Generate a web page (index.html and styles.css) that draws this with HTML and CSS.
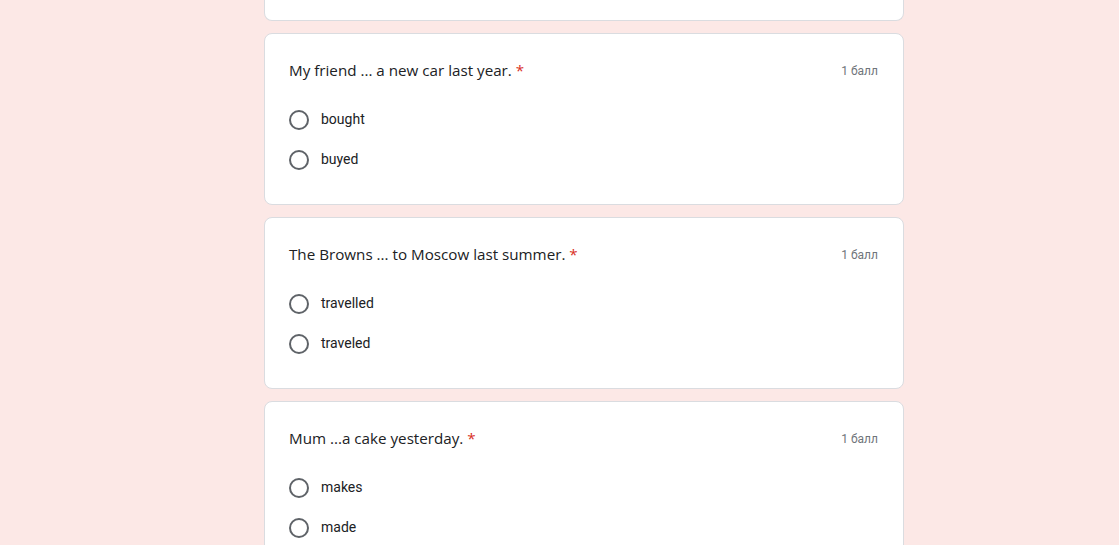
FILE: index.html
```html
<!DOCTYPE html>
<html lang="ru">
<head>
    <meta charset="UTF-8">
    <meta name="viewport" content="width=device-width, initial-scale=1.0">
    <title>Тест</title>
    <link rel="stylesheet" href="styles.css">
</head>
<body>
    <div class="form">
        <div class="card card-cut"></div>

        <div class="card">
            <div class="question">
                <div class="title">My friend ... a new car last year. <span class="req">*</span></div>
                <div class="points">1 балл</div>
            </div>
            <div class="options">
                <label class="option"><span class="radio"></span><span class="text">bought</span></label>
                <label class="option"><span class="radio"></span><span class="text">buyed</span></label>
            </div>
        </div>

        <div class="card">
            <div class="question">
                <div class="title">The Browns ... to Moscow last summer. <span class="req">*</span></div>
                <div class="points">1 балл</div>
            </div>
            <div class="options">
                <label class="option"><span class="radio"></span><span class="text">travelled</span></label>
                <label class="option"><span class="radio"></span><span class="text">traveled</span></label>
            </div>
        </div>

        <div class="card">
            <div class="question">
                <div class="title">Mum ...a cake yesterday. <span class="req">*</span></div>
                <div class="points">1 балл</div>
            </div>
            <div class="options">
                <label class="option"><span class="radio"></span><span class="text">makes</span></label>
                <label class="option"><span class="radio"></span><span class="text">made</span></label>
            </div>
        </div>
    </div>
</body>
</html>
```

FILE: styles.css
```css
* {
    box-sizing: border-box;
    margin: 0;
    padding: 0;
}
body {
    background: #fce8e6;
    font-family: Roboto, Arial, sans-serif;
    color: #202124;
    overflow: hidden;
}
.form {
    width: 640px;
    margin-left: 264px;
    display: flex;
    flex-direction: column;
    gap: 12px;
}
.card {
    background: #fff;
    border: 1px solid #dadce0;
    border-radius: 8px;
    padding: 24px 25px 24px 24px;
}
.card-cut {
    height: 21px;
    border-top: none;
    border-radius: 0 0 8px 8px;
    padding: 0;
}
.question {
    display: flex;
    justify-content: space-between;
    align-items: center;
}
.title {
    font-family: "Open Sans", Roboto, sans-serif;
    font-size: 15.2px;
    line-height: 24px;
    color: #202124;
}
.req {
    color: #d93025;
}
.points {
    font-size: 12px;
    color: #70757a;
    margin-top: 1px;
}
.options {
    margin-top: 18px;
}
.option {
    display: flex;
    align-items: center;
    height: 40px;
    font-size: 14px;
    color: #202124;
}
.option .text {
    margin-bottom: 2px;
}
.radio {
    width: 20px;
    height: 20px;
    border: 2px solid #5f6368;
    border-radius: 50%;
    margin-right: 12px;
}
```
